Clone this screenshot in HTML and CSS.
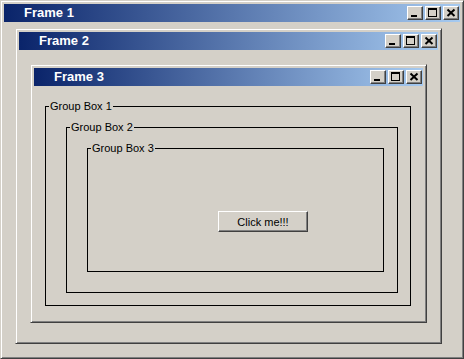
FILE: index.html
```html
<!DOCTYPE html>
<html lang="en-US">
  <head>
    <meta charset="utf-8">
    <meta name="viewport" content="width=device-width">
    <title>Nested frames</title>
    <link rel="stylesheet" href="styles.css">
  </head>

<body>
  <div class="frame frame-1">
    <div class="titlebar">
      <span class="title">Frame 1</span>
      <div class="controls">
        <span class="ctl"><svg width="14" height="12" viewBox="0 0 14 12"><rect x="3" y="8" width="6" height="2"/></svg></span>
        <span class="ctl"><svg width="14" height="12" viewBox="0 0 14 12"><path d="M2 1h9v9H2z M3 3v6h7V3z" fill-rule="evenodd"/></svg></span>
        <span class="ctl"><svg width="14" height="12" viewBox="0 0 14 12"><path d="M3.5 2.5l7 6.5M10.5 2.5l-7 6.5" stroke="#000" stroke-width="2"/></svg></span>
      </div>
    </div>
    <div class="frame-body body-1">

      <div class="frame frame-2">
        <div class="titlebar">
          <span class="title">Frame 2</span>
          <div class="controls">
            <span class="ctl"><svg width="14" height="12" viewBox="0 0 14 12"><rect x="3" y="8" width="6" height="2"/></svg></span>
            <span class="ctl"><svg width="14" height="12" viewBox="0 0 14 12"><path d="M2 1h9v9H2z M3 3v6h7V3z" fill-rule="evenodd"/></svg></span>
            <span class="ctl"><svg width="14" height="12" viewBox="0 0 14 12"><path d="M3.5 2.5l7 6.5M10.5 2.5l-7 6.5" stroke="#000" stroke-width="2"/></svg></span>
          </div>
        </div>
        <div class="frame-body body-2">

          <div class="frame frame-3">
            <div class="titlebar">
              <span class="title">Frame 3</span>
              <div class="controls">
                <span class="ctl"><svg width="14" height="12" viewBox="0 0 14 12"><rect x="3" y="8" width="6" height="2"/></svg></span>
                <span class="ctl"><svg width="14" height="12" viewBox="0 0 14 12"><path d="M2 1h9v9H2z M3 3v6h7V3z" fill-rule="evenodd"/></svg></span>
                <span class="ctl"><svg width="14" height="12" viewBox="0 0 14 12"><path d="M3.5 2.5l7 6.5M10.5 2.5l-7 6.5" stroke="#000" stroke-width="2"/></svg></span>
              </div>
            </div>
            <div class="frame-body body-3">
              <fieldset class="group group-1">
                <legend>Group Box 1</legend>
                <fieldset class="group group-2">
                  <legend>Group Box 2</legend>
                  <fieldset class="group group-3">
                    <legend>Group Box 3</legend>
                    <button class="push">Click me!!!</button>
                  </fieldset>
                </fieldset>
              </fieldset>
            </div>
          </div>

        </div>
      </div>

    </div>
  </div>
</body>

</html>
```

FILE: styles.css
```css
html, body {
  margin: 0;
}

body {
  background: #d4d0c8;
  font-family: "Liberation Sans", Arial, sans-serif;
}

.frame {
  box-sizing: border-box;
  display: flex;
  flex-direction: column;
  background: #d4d0c8;
  border: 1px solid;
  border-color: #d4d0c8 #404040 #404040 #d4d0c8;
  box-shadow: inset 1px 1px #fff, inset -1px -1px #808080;
  padding: 3px;
}

.frame-1 {
  width: 464px;
  height: 359px;
}

.frame-2,
.frame-3 {
  flex: 1;
}

.titlebar {
  display: flex;
  align-items: center;
  height: 18px;
  padding-left: 19px;
  background: linear-gradient(to right, #0a246a, #a6caf0);
}

.frame-2 .titlebar {
  padding-left: 20px;
}

.frame-1 .titlebar {
  padding-left: 20px;
}

.title {
  color: #fff;
  font-weight: bold;
  font-size: 13px;
  line-height: 18px;
}

.controls {
  display: flex;
  gap: 2px;
  margin-left: auto;
  padding-right: 1px;
}

.ctl {
  box-sizing: border-box;
  display: flex;
  width: 16px;
  height: 14px;
  background: #d4d0c8;
  border: 1px solid;
  border-color: #fff #404040 #404040 #fff;
  box-shadow: inset -1px -1px #808080;
}

.frame-body {
  flex: 1;
  display: flex;
  flex-direction: column;
}

.body-1 {
  padding: 6px 18px 11px 11px;
}

.body-2 {
  padding: 14px 11px 17px 11px;
}

.body-3 {
  padding: 14px 12px 13px 11px;
}

.group {
  flex: 1;
  display: flex;
  flex-direction: column;
  align-items: flex-start;
  min-width: 0;
  margin: 0;
  padding: 0;
  border: 1px solid #000;
}

.group legend {
  margin-left: 3px;
  padding: 0 1px;
  font-size: 11px;
  line-height: 13px;
  color: #000;
}

.group-2 {
  align-self: stretch;
  margin: 8px 12px 12px 20px;
}

.group-3 {
  align-self: stretch;
  margin: 8px 13px 20px 20px;
}

.push {
  box-sizing: border-box;
  width: 90px;
  height: 21px;
  margin: 56px 0 0 130px;
  padding: 0;
  font-family: inherit;
  font-size: 11px;
  color: #000;
  background: #d4d0c8;
  border: 1px solid;
  border-color: #fff #404040 #404040 #fff;
  box-shadow: inset -1px -1px #808080;
}
```
